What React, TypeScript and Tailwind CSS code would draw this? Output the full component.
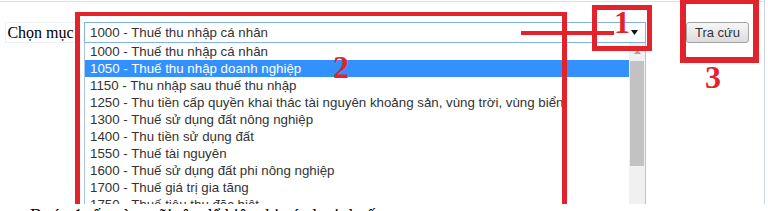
const items = [
  "1000 - Thuế thu nhập cá nhân",
  "1050 - Thuế thu nhập doanh nghiệp",
  "1150 - Thu nhập sau thuế thu nhập",
  "1250 - Thu tiền cấp quyền khai thác tài nguyên khoảng sản, vùng trời, vùng biển",
  "1300 - Thuế sử dụng đất nông nghiệp",
  "1400 - Thu tiền sử dụng đất",
  "1550 - Thuế tài nguyên",
  "1600 - Thuế sử dụng đất phi nông nghiệp",
  "1700 - Thuế giá trị gia tăng",
  "1750 - Thuế tiêu thu đặc biệt",
  "1800 - Thuế xuất khẩu",
]

const sans = "font-['Liberation_Sans',Arial,sans-serif]"
const serif = "font-['Liberation_Serif','Times_New_Roman',serif]"

export default function App() {
  return (
    <div className="w-[768px] h-[211px] overflow-hidden bg-white">
      {/* screenshot of the lookup form */}
      <div className="relative h-[204px] w-[765px] overflow-hidden border-r border-[#c8d6e6]">
        <div className="mt-px h-px bg-[#e3e3e3]" />

        <div className="flex items-start pt-[20px]">
          <div className={`ml-[5px] flex h-[21px] w-[71px] items-center justify-center border border-[#eef1f5] text-[16px] text-black ${serif}`}>
            Chọn mục
          </div>
          <div className={`ml-[8px] flex h-[21px] w-[562px] items-center border border-[#7fb2e6] pl-[5px] text-[13.3px] text-[#333] ${sans}`}>
            <span>1000 - Thuế thu nhập cá nhân</span>
            <svg className="ml-auto mr-[7px]" width="7" height="5" viewBox="0 0 7 5">
              <path d="M0 0h7L3.5 5z" fill="#111" />
            </svg>
          </div>
          <button className={`ml-[40px] h-[21px] w-[63px] rounded-[3px] border border-[#a3a3a3] bg-gradient-to-b from-[#f7f7f7] to-[#dcdcdc] text-[13px] text-[#333] ${sans}`}>
            Tra cứu
          </button>
        </div>

        {/* open dropdown list */}
        <div className="ml-[84px] flex w-[562px] border-x border-[#a9c6e6]">
          <div className={`flex-1 text-[13.3px] text-[#333] ${sans}`}>
            {items.map((t, i) => (
              <div
                key={t}
                className={`h-[17px] whitespace-nowrap pl-[5px] leading-[17px] ${i === 1 ? "bg-[#3391ff] text-white" : ""}`}
              >
                {t}
              </div>
            ))}
          </div>
          <div className="flex w-[16px] flex-col bg-[#f0f0f0]">
            <div className="flex h-[18px] items-center justify-center">
              <svg width="7" height="4" viewBox="0 0 7 4">
                <path d="M0 4h7L3.5 0z" fill="#a3a3a3" />
              </svg>
            </div>
            <div className="mx-px h-[105px] bg-[#c2c2c2]" />
          </div>
        </div>

        {/* red annotations */}
        <div className="absolute left-[75px] top-[12px] h-[260px] w-[492px] border-[5px] border-t-4 border-[#e3232b]" />
        <div className="absolute left-[592px] top-[5px] h-[46px] w-[60px] border-[5px] border-[#e3232b]" />
        <div className="absolute left-[680px] top-[-2px] h-[65px] w-[79px] border-[6px] border-[#e3232b]" />
        <div className="absolute left-[521px] top-[31px] h-[4px] w-[93px] bg-[#e3232b]" />
        <span className={`absolute left-[614px] top-[6px] text-[32px] font-bold leading-none text-[#e3232b] ${serif}`}>1</span>
        <span className={`absolute left-[333px] top-[51px] text-[32px] font-bold leading-none text-[#e3232b] ${serif}`}>2</span>
        <span className={`absolute left-[705px] top-[61px] text-[32px] font-bold leading-none text-[#e3232b] ${serif}`}>3</span>
      </div>

      <p className={`pl-[30px] pt-[3px] text-[18px] leading-none text-black ${serif}`}>
        Bước 1: ấn vào mũi tên để hiện thị các loại thuế
      </p>
    </div>
  )
}
